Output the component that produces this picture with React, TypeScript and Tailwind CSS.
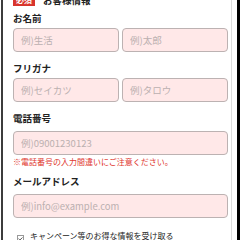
import { Check } from 'lucide-react'

const font = { fontFamily: '"Noto Sans CJK JP", "Noto Sans", sans-serif' }

function Label({ children, className = '' }: { children: string; className?: string }) {
  return (
    <div className={`text-[9.5px] leading-[11px] font-bold text-[#222] ${className}`}>{children}</div>
  )
}

function Field({ placeholder }: { placeholder: string }) {
  return (
    <input
      type="text"
      placeholder={placeholder}
      className="h-[24px] w-full min-w-0 rounded-[4px] border border-[#bcb2b2] bg-[#ffe8e8] px-[7px] text-[9.5px] text-[#333] outline-none placeholder:text-[#bbb0b0]"
    />
  )
}

export default function App() {
  return (
    <div className="flex h-[240px] w-[240px] overflow-hidden bg-white" style={font}>
      <div className="w-[1px] shrink-0 bg-white" />
      <div className="w-[2px] shrink-0 bg-[#3c3c3c]" />
      <main className="flex w-[229px] shrink-0 flex-col border-r border-[#dcdcdc] pl-[10px] pr-[3px]">
        <div className="mt-[-6px] flex items-center gap-[8px]">
          <span className="flex h-[12px] w-[22px] items-center justify-center bg-[#d8342c] text-[8px] font-bold leading-none text-white">
            必須
          </span>
          <span className="text-[9.5px] font-bold leading-[12px] text-[#222]">お客様情報</span>
        </div>

        <Label className="mt-[7px]">お名前</Label>
        <div className="mt-[4px] grid grid-cols-2 gap-[3px]">
          <Field placeholder="例)生活" />
          <Field placeholder="例)太郎" />
        </div>

        <Label className="mt-[11px]">フリガナ</Label>
        <div className="mt-[4px] grid grid-cols-2 gap-[3px]">
          <Field placeholder="例)セイカツ" />
          <Field placeholder="例)タロウ" />
        </div>

        <Label className="mt-[11px]">電話番号</Label>
        <div className="mt-[4px]">
          <Field placeholder="例)09001230123" />
        </div>
        <p className="mt-[2px] text-[8px] leading-[9px] text-[#e0362e]">
          ※電話番号の入力間違いにご注意ください。
        </p>

        <Label className="mt-[10px]">メールアドレス</Label>
        <div className="mt-[4px]">
          <Field placeholder="例)info@example.com" />
        </div>

        <label className="mt-[12px] flex items-start gap-[6px] pl-[4px]">
          <span className="mt-[5px] flex h-[7px] w-[7px] shrink-0 items-center justify-center border border-[#999] bg-white">
            <Check className="h-[6px] w-[6px] text-[#333]" strokeWidth={4} />
          </span>
          <span className="text-[8px] leading-[11px] text-[#222]">キャンペーン等のお得な情報を受け取る</span>
        </label>
      </main>
      <div className="w-[5px] shrink-0 bg-white" />
      <div className="w-[3px] shrink-0 bg-black" />
    </div>
  )
}
